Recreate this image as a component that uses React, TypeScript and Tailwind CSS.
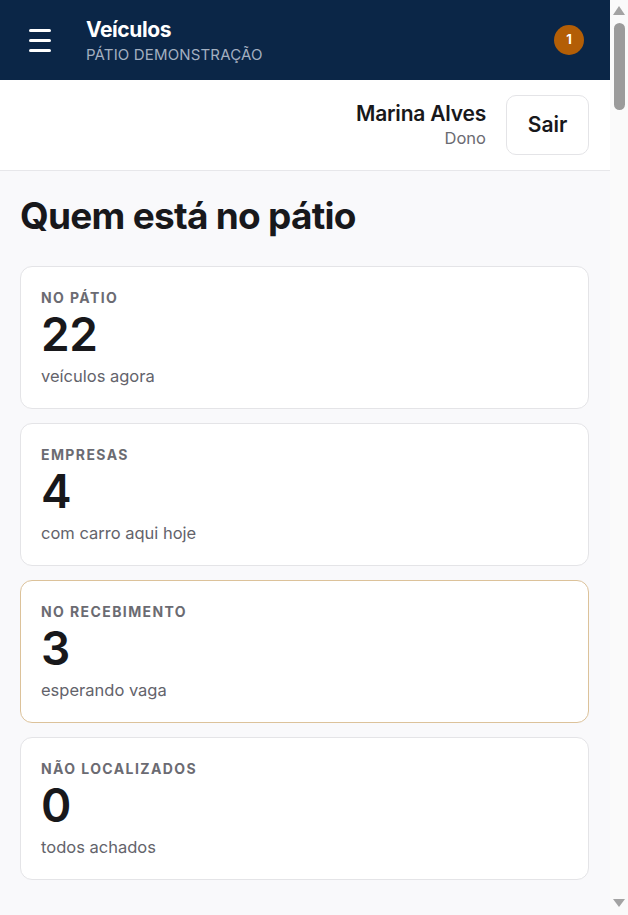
import React from "react";

type Stat = {
  label: string;
  value: number;
  caption: string;
  highlight?: boolean;
};

const stats: Stat[] = [
  { label: "No pátio", value: 22, caption: "veículos agora" },
  { label: "Empresas", value: 4, caption: "com carro aqui hoje" },
  { label: "No recebimento", value: 3, caption: "esperando vaga", highlight: true },
  { label: "Não localizados", value: 0, caption: "todos achados" },
];

function StatCard({ stat }: { stat: Stat }) {
  return (
    <div
      className={`rounded-xl border bg-white px-[20px] pt-[22px] pb-[21px] ${
        stat.highlight ? "border-[#dcc29a]" : "border-[#e4e4e7]"
      }`}
    >
      <div className="text-[14px] font-bold uppercase leading-[18px] tracking-[0.1em] text-[#6b6b72]">
        {stat.label}
      </div>
      <div className="mt-[2px] text-[46px] font-semibold leading-[50px] tracking-[-0.01em] text-[#18181b]">
        {stat.value}
      </div>
      <div className="mt-[6px] text-[16.5px] leading-[22px] text-[#63636b]">{stat.caption}</div>
    </div>
  );
}

// page scrollbar, as it shows in the screenshot
function ScrollRail() {
  return (
    <div className="fixed right-0 top-0 flex h-screen w-[18px] flex-col items-center bg-[#fafafa] pt-[6px] pb-[8px]">
      <svg width="12" height="9" viewBox="0 0 12 9">
        <path d="M6 0 L12 9 L0 9 Z" fill="#a3a3a3" />
      </svg>
      <div className="mt-[8px] h-[87px] w-[11px] rounded-full bg-[#9b9b9b]" />
      <div className="flex-1" />
      <svg width="12" height="8" viewBox="0 0 12 8">
        <path d="M0 0 L12 0 L6 8 Z" fill="#a3a3a3" />
      </svg>
    </div>
  );
}

export default function App() {
  return (
    <div
      className="min-h-screen bg-[#f9f9fb] pr-[18px]"
      style={{ fontFamily: "Inter, Roboto, 'Liberation Sans', sans-serif" }}
    >
      <header className="flex h-[80px] items-center bg-[#0b2647] pl-[29px] pr-[26px]">
        <button type="button" className="flex h-[23px] w-[22px] flex-col justify-between">
          <span className="block h-[3px] w-full rounded-sm bg-white" />
          <span className="block h-[3px] w-full rounded-sm bg-white" />
          <span className="block h-[3px] w-full rounded-sm bg-white" />
        </button>
        <div className="ml-[35px] flex flex-col">
          <span className="text-[21px] font-bold leading-[25px] tracking-[-0.02em] text-white">
            Veículos
          </span>
          <span className="mt-[3px] text-[15px] leading-[19px] tracking-[0.01em] text-[#a3afc0]">
            PÁTIO DEMONSTRAÇÃO
          </span>
        </div>
        <div className="ml-auto flex h-[30px] w-[30px] items-center justify-center rounded-full bg-[#b35e06] text-[13px] font-bold text-white">
          1
        </div>
      </header>

      <div className="flex h-[91px] items-center justify-end border-b border-[#e7e7ea] bg-white pl-5 pr-[21px]">
        <div className="flex flex-col items-end">
          <span className="text-[21px] font-semibold leading-[26px] tracking-[-0.01em] text-[#18181b]">
            Marina Alves
          </span>
          <span className="text-[16.5px] leading-[22px] text-[#6b6b72]">Dono</span>
        </div>
        <button
          type="button"
          className="ml-[20px] h-[60px] w-[83px] rounded-[10px] border border-[#e4e4e7] bg-white text-[21px] font-semibold text-[#18181b]"
        >
          Sair
        </button>
      </div>

      <main className="min-h-[7400px] pl-5 pr-[21px] pt-[23px]">
        <h1 className="text-[37px] font-bold leading-[44px] tracking-[-0.02em] text-[#18181b]">
          Quem está no pátio
        </h1>
        <div className="mt-[28px] flex flex-col gap-[14px]">
          {stats.map((s) => (
            <StatCard key={s.label} stat={s} />
          ))}
        </div>
      </main>

      <ScrollRail />
    </div>
  );
}
